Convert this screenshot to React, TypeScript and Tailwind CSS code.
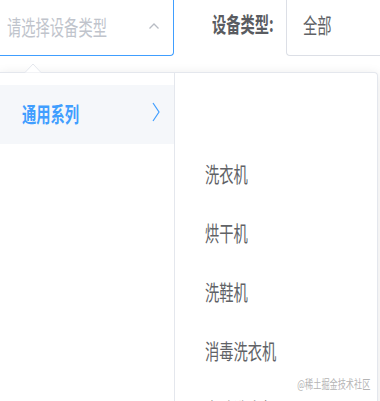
import React from 'react';

const FONT = { fontFamily: '"Noto Sans CJK SC", "Noto Sans", sans-serif' };

// the screenshot is squeezed sideways, so glyphs are narrower than tall
const Squeezed: React.FC<{ children: React.ReactNode; className?: string }> = ({ children, className }) => (
  <span className={`inline-block scale-x-[0.68] whitespace-nowrap ${className ?? 'origin-left'}`}>{children}</span>
);

const DEVICES = ['洗衣机', '烘干机', '洗鞋机', '消毒洗衣机', '自助洗衣机'];

const App: React.FC = () => {
  return (
    <div className="relative w-[380px] h-[401px] overflow-hidden bg-white" style={FONT}>
      {/* filter row */}
      <div className="flex h-14 items-stretch">
        <div className="w-[174px] shrink-0 flex items-center border-r border-b border-[#409eff] rounded-br-[4px] pl-[7px] pr-[13px]">
          <div className="flex-1 min-w-0 overflow-visible">
            <Squeezed className="origin-left text-[21px] leading-none text-[#c0c4cc] -mt-[5px]">请选择设备类型</Squeezed>
          </div>
          <svg width="12" height="8" viewBox="0 0 12 8" className="shrink-0 -mt-[4px]">
            <path d="M1.5 6.5 L6 2 L10.5 6.5" fill="none" stroke="#b8bcc4" strokeWidth="1.3" />
          </svg>
        </div>
        <div className="w-[112px] shrink-0 flex items-center pl-[38px]">
          <Squeezed className="origin-left text-[21px] leading-none font-bold text-[#5a5c61] -mt-[10px]">设备类型:</Squeezed>
        </div>
        <div className="flex-1 flex items-center border-l border-b border-[#dcdfe6] rounded-bl-[4px] pl-[16px]">
          <Squeezed className="origin-left text-[21px] leading-none text-[#606266] -mt-[6px]">全部</Squeezed>
        </div>
      </div>

      {/* cascader dropdown */}
      <div className="relative mt-4">
        <svg width="16" height="10" viewBox="0 0 16 10" className="absolute left-[25px] -top-[9px] z-10">
          <path d="M0 9.5 L8 1 L16 9.5" fill="#ffffff" stroke="#e4e7ed" strokeWidth="1" />
        </svg>
        <div className="flex w-[378px] border-t border-r border-[#e4e7ed] rounded-tr-[4px] bg-white shadow-[0_2px_12px_rgba(0,0,0,0.1)]">
          <div className="w-[175px] shrink-0 border-r border-[#e4e7ed] pt-3 h-[340px]">
            <div className="h-[59px] bg-[#f5f7fa] flex items-center justify-between pl-[22px] pr-[14px]">
              <Squeezed className="origin-left text-[21px] leading-none font-bold text-[#409eff] -mt-[3px]">通用系列</Squeezed>
              <svg width="8" height="20" viewBox="0 0 8 20" className="shrink-0 -mt-[5px]">
                <path d="M1 1 L7 10 L1 19" fill="none" stroke="#409eff" strokeWidth="1.2" />
              </svg>
            </div>
          </div>
          <div className="flex-1 pt-[71px]">
            {DEVICES.map(d => (
              <div key={d} className="h-[59px] flex items-center pl-[30px]">
                <Squeezed className="origin-left text-[21px] leading-none text-[#606266]">{d}</Squeezed>
              </div>
            ))}
          </div>
        </div>
      </div>

      <div className="absolute right-[10px] bottom-[11px] text-[12px] leading-none text-[#b4b4b4]">
        <Squeezed className="origin-right">@稀土掘金技术社区</Squeezed>
      </div>
    </div>
  );
};

export default App;
